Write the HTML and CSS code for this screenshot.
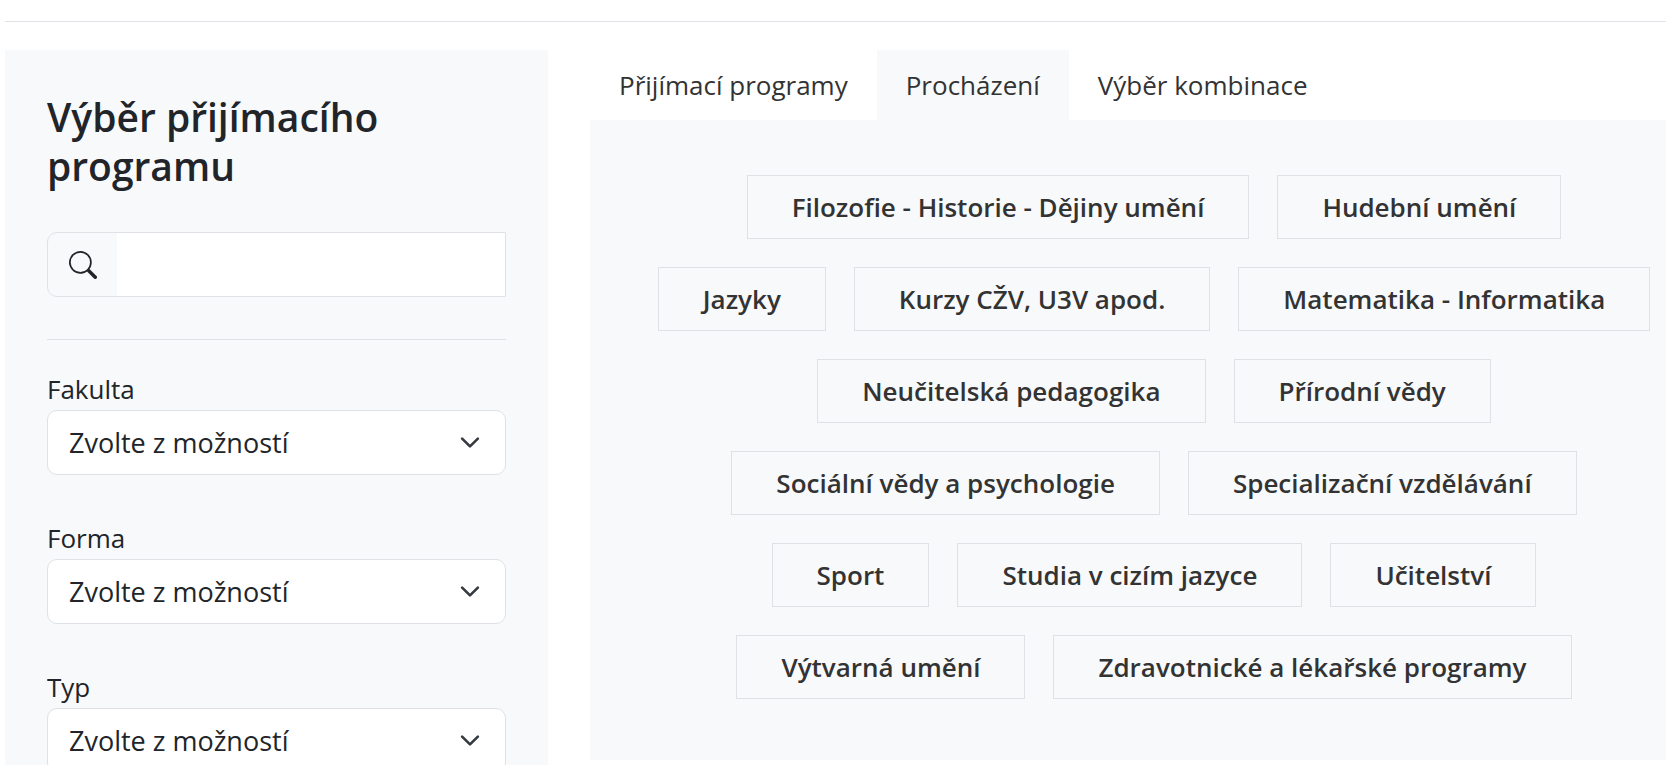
FILE: index.html
```html
<!DOCTYPE html>
<html lang="cs">
<head>
    <meta charset="UTF-8">
    <meta name="viewport" content="width=device-width, initial-scale=1.0">
    <title>Výběr přijímacího programu</title>
    <link rel="stylesheet" href="styles.css">
</head>
<body>
    <div class="page">
        <hr class="line">
        <div class="layout">
            <aside class="sidebar">
                <h1 class="title">Výběr přijímacího programu</h1>
                <div class="search">
                    <label class="search-icon" for="hledat" aria-label="Hledat">
                        <svg width="28" height="28" viewBox="0 0 16 16" fill="currentColor" aria-hidden="true">
                            <path d="M11.742 10.344a6.5 6.5 0 1 0-1.397 1.398h-.001q.044.06.098.115l3.85 3.85a1 1 0 0 0 1.415-1.414l-3.85-3.85a1 1 0 0 0-.115-.1zM12 6.5a5.5 5.5 0 1 1-11 0 5.5 5.5 0 0 1 11 0"/>
                        </svg>
                    </label>
                    <input class="search-input" type="text" id="hledat">
                </div>
                <hr class="line">
                <form class="filters">
                    <div class="field">
                        <label for="fakulta">Fakulta</label>
                        <select class="select" id="fakulta">
                            <option>Zvolte z možností</option>
                        </select>
                    </div>
                    <div class="field">
                        <label for="forma">Forma</label>
                        <select class="select" id="forma">
                            <option>Zvolte z možností</option>
                        </select>
                    </div>
                    <div class="field">
                        <label for="typ">Typ</label>
                        <select class="select" id="typ">
                            <option>Zvolte z možností</option>
                        </select>
                    </div>
                </form>
            </aside>

            <main class="content">
                <nav class="tabs">
                    <a class="tab" href="#programy">Přijímací programy</a>
                    <a class="tab active" href="#prochazeni">Procházení</a>
                    <a class="tab" href="#kombinace">Výběr kombinace</a>
                </nav>
                <div class="panel">
                    <button class="opt" type="button">Filozofie - Historie - Dějiny umění</button>
                    <button class="opt" type="button">Hudební umění</button>
                    <button class="opt" type="button">Jazyky</button>
                    <button class="opt" type="button">Kurzy CŽV, U3V apod.</button>
                    <button class="opt" type="button">Matematika - Informatika</button>
                    <button class="opt" type="button">Neučitelská pedagogika</button>
                    <button class="opt" type="button">Přírodní vědy</button>
                    <button class="opt" type="button">Sociální vědy a psychologie</button>
                    <button class="opt" type="button">Specializační vzdělávání</button>
                    <button class="opt" type="button">Sport</button>
                    <button class="opt" type="button">Studia v cizím jazyce</button>
                    <button class="opt" type="button">Učitelství</button>
                    <button class="opt" type="button">Výtvarná umění</button>
                    <button class="opt" type="button">Zdravotnické a lékařské programy</button>
                </div>
            </main>
        </div>
    </div>
</body>
</html>
```
FILE: styles.css
```css
* {
    box-sizing: border-box;
}

body {
    margin: 0;
    background-color: #fff;
    color: #212529;
    font-family: "Segoe UI", "Open Sans", "Noto Sans", sans-serif;
    font-size: 26px;
    line-height: 42px;
}

.page {
    padding: 21px 0 0 5px;
}

.line {
    margin: 0;
    border: 0;
    border-top: 1px solid #dee2e6;
}

.layout {
    display: grid;
    grid-template-columns: minmax(0, 543fr) minmax(0, 1076fr);
    gap: 42px;
    align-items: start;
    margin-top: 28px;
}

/* levý panel s filtry */
.sidebar {
    padding: 42px;
    background-color: #f8f9fb;
}

.title {
    margin: 0 0 42px;
    font-size: 39px;
    font-weight: 600;
    line-height: 49px;
}

.search {
    display: flex;
    height: 65px;
    margin-bottom: 42px;
    border: 1px solid #dee2e6;
    border-radius: 10px 0 0 10px;
    overflow: hidden;
}

.search-icon {
    display: flex;
    align-items: center;
    padding: 0 20px 0 21px;
}

.search-input {
    flex: 1;
    min-width: 0;
    padding: 0 21px;
    border: 0;
    background-color: #fff;
    color: inherit;
    font: inherit;
}

.filters {
    display: flex;
    flex-direction: column;
    gap: 42px;
    margin-top: 28px;
}

.field {
    display: flex;
    flex-direction: column;
}

.select {
    height: 65px;
    padding: 0 63px 0 21px;
    border: 1px solid #dee2e6;
    border-radius: 10px;
    background: #fff url("data:image/svg+xml,%3csvg xmlns='http://www.w3.org/2000/svg' viewBox='0 0 16 16'%3e%3cpath fill='none' stroke='%23343a40' stroke-linecap='round' stroke-linejoin='round' stroke-width='2' d='m2 5 6 6 6-6'/%3e%3c/svg%3e") no-repeat right 21px center / 28px 21px;
    color: inherit;
    font: inherit;
    font-size: 27px;
    appearance: none;
}

/* záložky a obory */
.tabs {
    display: flex;
}

.tab {
    padding: 14px 29px;
    color: #333;
    text-decoration: none;
}

.tab.active {
    background-color: #f8f9fb;
}

.panel {
    display: flex;
    flex-wrap: wrap;
    justify-content: center;
    gap: 28px;
    padding: 55px 10px 61px 62px;
    background-color: #f8f9fb;
}

.opt {
    height: 64px;
    padding: 0 44px;
    border: 1px solid #dee2e6;
    background-color: transparent;
    color: #333;
    font: inherit;
    font-weight: 600;
    cursor: pointer;
}
```
